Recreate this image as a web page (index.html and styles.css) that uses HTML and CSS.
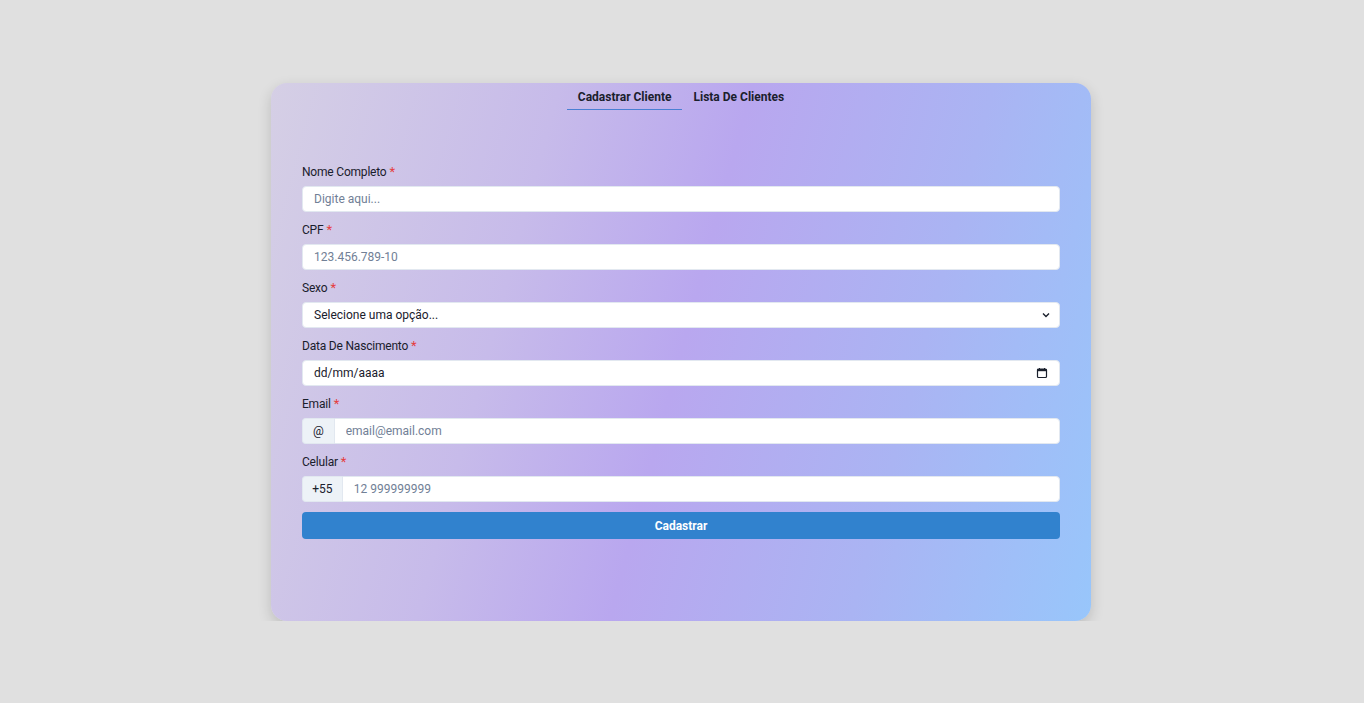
FILE: index.html
```html
<!DOCTYPE html>
<html lang="pt-BR">
<head>
<meta charset="utf-8">
<title>Cadastro de Clientes</title>
<link rel="stylesheet" href="styles.css">
</head>
<body>
<main class="card">
  <nav class="tabs">
    <button class="tab active">Cadastrar Cliente</button>
    <button class="tab">Lista De Clientes</button>
  </nav>
  <form class="form">
    <div class="field">
      <label class="label">Nome Completo<span class="req">*</span></label>
      <input class="input" type="text" placeholder="Digite aqui...">
    </div>
    <div class="field">
      <label class="label">CPF<span class="req">*</span></label>
      <input class="input" type="text" placeholder="123.456.789-10">
    </div>
    <div class="field">
      <label class="label">Sexo<span class="req">*</span></label>
      <div class="control">
        <select class="input select">
          <option>Selecione uma opção...</option>
          <option>Masculino</option>
          <option>Feminino</option>
        </select>
        <svg class="ctrl-icon chevron" width="10" height="10" viewBox="0 0 10 10"><path d="M2 3.5 L5 6.5 L8 3.5" fill="none" stroke="#1a202c" stroke-width="1.4"/></svg>
      </div>
    </div>
    <div class="field">
      <label class="label">Data De Nascimento<span class="req">*</span></label>
      <div class="control">
        <input class="input date" type="text" value="dd/mm/aaaa">
        <svg class="ctrl-icon cal" width="12" height="12" viewBox="0 0 12 12"><rect x="1.5" y="2" width="9" height="8.5" rx="1" fill="none" stroke="#1a202c" stroke-width="1.2"/><rect x="1.5" y="2" width="9" height="2.2" fill="#1a202c"/><path d="M3.5 1v1.5M8.5 1v1.5" stroke="#1a202c" stroke-width="1"/></svg>
      </div>
    </div>
    <div class="field">
      <label class="label">Email<span class="req">*</span></label>
      <div class="group">
        <span class="addon addon-at">@</span>
        <input class="input grouped" type="text" placeholder="email@email.com">
      </div>
    </div>
    <div class="field">
      <label class="label">Celular<span class="req">*</span></label>
      <div class="group">
        <span class="addon addon-phone">+55</span>
        <input class="input grouped" type="text" placeholder="12 999999999">
      </div>
    </div>
    <button class="submit" type="button">Cadastrar</button>
  </form>
</main>
</body>
</html>
```

FILE: styles.css
```css
* { box-sizing: border-box; }

body {
  margin: 0;
  background: #e0e0e0;
  font-family: Roboto, "Noto Sans", sans-serif;
  color: #1a202c;
}

.card {
  width: 820px;
  height: 538px;
  margin: 83px 0 0 calc(50% - 411px);
  border-radius: 16px;
  background: linear-gradient(105deg, #d5cfe5 0%, #c7bbea 30%, #b9a7ef 50%, #aab4f3 75%, #98c6fb 100%);
  box-shadow: 0 5px 14px rgba(0, 0, 0, 0.16);
  padding: 0 31px;
}

.tabs {
  display: flex;
  justify-content: center;
}

.tab {
  font-family: inherit;
  font-size: 12px;
  font-weight: 700;
  line-height: 18px;
  color: #1a202c;
  background: none;
  border: none;
  border-bottom: 1px solid transparent;
  padding: 5px 11px 3px;
  margin: 0;
  cursor: pointer;
}

.tab.active {
  border-bottom-color: #4a7fd3;
}

.form {
  margin-top: 53px;
  display: flex;
  flex-direction: column;
}

.field {
  display: flex;
  flex-direction: column;
  margin-bottom: 9px;
}

.field:nth-child(6) {
  margin-bottom: 10px;
}

.label {
  font-size: 12px;
  line-height: 18px;
  margin-bottom: 5px;
  color: #1a202c;
  letter-spacing: -0.2px;
}

.req {
  color: #e53e3e;
  margin-left: 3px;
  font-size: 13px;
  letter-spacing: 0;
}

.input {
  width: 100%;
  height: 26px;
  border: 1px solid #e2e8f0;
  border-radius: 4px;
  background: #fff;
  padding: 0 11px;
  font-family: inherit;
  font-size: 12px;
  color: #1a202c;
  outline: none;
}

.input::placeholder {
  color: #718096;
}

.control {
  position: relative;
}

.select {
  appearance: none;
  -webkit-appearance: none;
}

.ctrl-icon {
  position: absolute;
  top: 50%;
  transform: translateY(-50%);
  pointer-events: none;
}

.chevron { right: 9px; }
.cal { right: 12px; }

.group {
  display: flex;
}

.addon {
  height: 26px;
  display: flex;
  align-items: center;
  justify-content: center;
  background: #edf2f7;
  border: 1px solid #e2e8f0;
  border-right: none;
  border-radius: 4px 0 0 4px;
  font-size: 12px;
  color: #1a202c;
}

.addon-at { width: 33px; }
.addon-phone { width: 42px; }

.grouped {
  border-radius: 0 4px 4px 0;
}

.submit {
  height: 27px;
  width: 100%;
  border: none;
  border-radius: 4px;
  background: #3182ce;
  color: #fff;
  font-family: inherit;
  font-size: 12px;
  font-weight: 700;
  cursor: pointer;
}
```
